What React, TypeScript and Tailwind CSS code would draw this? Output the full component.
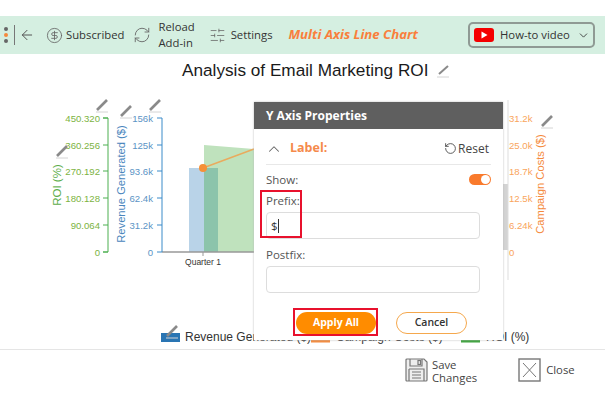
import React from "react";
import { ArrowLeft, ChevronDown, ChevronUp, CircleDollarSign, RefreshCw, RotateCcw, SlidersHorizontal } from "lucide-react";

const chartFont = '"Liberation Sans", Arial, sans-serif';

// Small pencil mark shown beside every editable chart label
function Pencil({ x, y }: { x: number; y: number }) {
  return (
    <g transform={`translate(${x} ${y})`}>
      <path d="M-5 4 L5 -6" stroke="#8a8a8a" strokeWidth="2.6" />
      <path d="M-6 6 H6" stroke="#d4d4d4" strokeWidth="1" />
    </g>
  );
}

type Tick = { y: number; label: string };

const ys = [118, 145, 171, 198, 225, 252];
const roiTicks: Tick[] = ["450.320", "360.256", "270.192", "180.128", "90.064", "0"].map((label, i) => ({ y: ys[i], label }));
const revenueTicks: Tick[] = ["156k", "125k", "93.6k", "62.4k", "31.2k", "0"].map((label, i) => ({ y: ys[i], label }));
const costTicks: Tick[] = ["31.2k", "25.0k", "18.7k", "12.5k", "6.24k", "0"].map((label, i) => ({ y: ys[i], label }));

function Chart() {
  return (
    <svg viewBox="0 86 605 263" className="block w-[605px] h-[263px]" style={{ fontFamily: chartFont }}>
      {/* series */}
      <path d="M204 145 L254 149 V252 H204 Z" fill="#bfe2bd" />
      <rect x="189" y="168" width="29" height="84" fill="#b9d3e8" />
      <rect x="204" y="168" width="14" height="84" fill="#8cc4ab" />
      <path d="M203 168 L254 149" stroke="#e9ab5e" strokeWidth="1.5" fill="none" />
      <circle cx="203" cy="168" r="4" fill="#f59138" />
      <rect x="503" y="184" width="5" height="66" fill="#d3d3d3" />

      {/* base line */}
      <path d="M162 252 H254" stroke="#999999" strokeWidth="1.5" />
      <path d="M203 252 V256" stroke="#999999" />
      <text x="203" y="265" fontSize="8.5" textAnchor="middle" fill="#333333">Quarter 1</text>

      {/* ROI axis */}
      <path d="M103 118 H108 V252 H103" stroke="#4caf50" strokeWidth="1" fill="none" />
      {roiTicks.map((t) => (
        <g key={t.label}>
          <path d={`M103 ${t.y} H108`} stroke="#4caf50" />
          <text x="100" y={t.y + 3.5} fontSize="9.6" textAnchor="end" fill="#7cb342">{t.label}</text>
        </g>
      ))}
      <text transform="translate(61 185) rotate(-90)" fontSize="11.5" textAnchor="middle" fill="#5cad4a">ROI (%)</text>

      {/* Revenue axis */}
      <path d="M162 118 V252" stroke="#3b8bc9" strokeWidth="1" />
      {revenueTicks.map((t) => (
        <g key={t.label}>
          <path d={`M157 ${t.y} H162`} stroke="#3b8bc9" />
          <text x="153" y={t.y + 3.5} fontSize="9.6" textAnchor="end" fill="#5b94c5">{t.label}</text>
        </g>
      ))}
      <text transform="translate(125 184) rotate(-90)" fontSize="11.2" textAnchor="middle" fill="#4a86bd">Revenue Generated ($)</text>

      {/* Campaign costs axis */}
      <path d="M508 100 V280" stroke="#dddddd" />
      {costTicks.map((t) => (
        <text key={t.label} x="509" y={t.y + 3.5} fontSize="9.6" fill="#f9a45c">{t.label}</text>
      ))}
      <text transform="translate(544 184) rotate(-90)" fontSize="11.2" textAnchor="middle" fill="#f58a3c">Campaign Costs ($)</text>

      {/* legend */}
      <rect x="161" y="333" width="19" height="9" fill="#2a75b3" />
      <text x="185" y="341" fontSize="12" fill="#333333">Revenue Generated ($)</text>
      <rect x="311" y="340" width="19" height="2.5" fill="#f58a3c" />
      <text x="336" y="341" fontSize="12" fill="#333333">Campaign Costs ($)</text>
      <rect x="461" y="340" width="19" height="2.5" fill="#3da33d" />
      <text x="486" y="341" fontSize="12" fill="#333333">ROI (%)</text>

      <Pencil x={102} y={106} />
      <Pencil x={126} y={112} />
      <Pencil x={155} y={106} />
      <Pencil x={62} y={152} />
      <Pencil x={547} y={122} />
      <Pencil x={172} y={332} />
    </svg>
  );
}

function AxisDialog() {
  return (
    <div className="absolute left-[254px] top-[102px] w-[249px] h-[238px] bg-white shadow-[0_0_2px_#bbbbbb] text-[11.5px] text-[#555555]">
      <div className="h-[27px] bg-[#5f5f5f] flex items-center pl-3 text-[12px] font-bold text-white">Y Axis Properties</div>
      <div className="mx-3 h-[36px] pt-1 flex items-center border-b border-[#e8e8e8]">
        <ChevronUp size={18} strokeWidth={1.4} className="text-[#666666] mr-[7px] -ml-[1px]" />
        <span className="text-[12.5px] font-bold text-[#f58a4b]">Label:</span>
        <div className="ml-auto mr-[2px] flex items-center gap-[1px] text-[12px] text-[#444444]">
          <RotateCcw size={13} strokeWidth={1.6} />
          Reset
        </div>
      </div>
      <div className="mx-3 mt-[6px] h-[16px] flex items-center justify-between">
        <span className="pt-[2px]">Show:</span>
        <div className="w-[22px] h-[11px] rounded-full bg-[#f97a2c] flex justify-end items-center pr-[1px]">
          <div className="w-[9px] h-[9px] rounded-full bg-white" />
        </div>
      </div>
      <div className="mx-3 mt-[6px] leading-[16px]">Prefix:</div>
      <div className="ml-3 mr-[23px] mt-[3px] h-[27px] border border-[#dddddd] rounded-[4px] flex items-center pl-1 text-[#333333]">
        $<span className="w-px h-[14px] bg-[#333333]" />
      </div>
      <div className="mx-3 mt-[8px] leading-[16px]">Postfix:</div>
      <div className="ml-3 mr-[23px] mt-[3px] h-[27px] border border-[#dddddd] rounded-[4px]" />
      <div className="mt-[19px] flex pl-[42px] gap-[20px]">
        <button className="w-[80px] h-[22px] rounded-full bg-[#ff8c00] text-white text-[10.5px] font-bold">Apply All</button>
        <button className="w-[71px] h-[22px] rounded-full bg-white border border-[#f5a84d] text-[#333333] text-[10.5px] font-semibold">Cancel</button>
      </div>
      {/* red highlight boxes */}
      <div className="absolute left-[6px] top-[88px] w-[42px] h-[48px] border-[2px] border-[#e8112d]" />
      <div className="absolute left-[39px] top-[206px] w-[85px] h-[28px] border-[2px] border-[#e8112d]" />
    </div>
  );
}

export default function App() {
  return (
    <div className="relative w-[605px] h-[404px] overflow-hidden bg-white" style={{ fontFamily: '"Open Sans", sans-serif' }}>
      <div className="h-4" />
      {/* toolbar */}
      <div className="h-[38px] bg-[#d5efe1] flex items-center text-[11.3px] text-[#333333]">
        <div className="ml-1 w-[4px] flex flex-col gap-[2px]">
          <span className="w-1 h-1 rounded-full bg-[#666666]" />
          <span className="w-1 h-1 rounded-full bg-[#f58a3c]" />
          <span className="w-1 h-1 rounded-full bg-[#666666]" />
        </div>
        <div className="ml-[6px] w-px h-[20px] bg-[#777777]" />
        <ArrowLeft size={16} strokeWidth={1.5} className="ml-[4px] text-[#555555]" />
        <CircleDollarSign size={17} strokeWidth={1.2} className="ml-[11px] text-[#666666]" />
        <span className="ml-[3px] whitespace-nowrap">Subscribed</span>
        <RefreshCw size={18} strokeWidth={1.2} className="ml-[9px] text-[#666666]" />
        <span className="ml-[7px] leading-[16px] whitespace-nowrap">Reload<br />Add-in</span>
        <SlidersHorizontal size={17} strokeWidth={1.1} className="ml-[14px] text-[#666666]" />
        <span className="ml-[5px] whitespace-nowrap">Settings</span>
        <span className="ml-[16px] text-[13.2px] font-bold italic text-[#f97f3c] whitespace-nowrap">Multi Axis Line Chart</span>
        <div className="ml-auto mr-[10px] w-[127px] h-[26px] border-2 border-[#8f9a94] rounded-[5px] flex items-center pl-1 shrink-0">
          <svg width="20" height="14" viewBox="0 0 20 14" className="shrink-0">
            <rect width="20" height="14" rx="3" fill="#f40000" />
            <path d="M7.5 3.5 L13.5 7 L7.5 10.5 Z" fill="#ffffff" />
          </svg>
          <span className="ml-[6px] whitespace-nowrap">How-to video</span>
          <ChevronDown size={13} strokeWidth={1.6} className="ml-auto mr-[3px] shrink-0" />
        </div>
      </div>

      {/* chart title */}
      <div className="h-8 pt-[2px] flex items-center pl-[182px] text-[17.2px] text-[#1a1a1a]" style={{ fontFamily: chartFont }}>
        Analysis of Email Marketing ROI
        <svg width="14" height="14" viewBox="0 0 14 14" className="ml-[8px]">
          <path d="M3 10 L12 2" stroke="#8a8a8a" strokeWidth="2" />
          <path d="M1 13 H13" stroke="#d4d4d4" />
        </svg>
      </div>

      <Chart />

      {/* footer */}
      <div className="border-t border-[#e5e5e5] flex items-start pt-2 pl-[405px] text-[11.3px] text-[#444444]">
        <svg width="23" height="24" viewBox="0 0 23 24" fill="none" stroke="#777777" strokeWidth="1.2">
          <path d="M2 1 H19 L22 4 V22 Q22 23 21 23 H2 Q1 23 1 22 V2 Q1 1 2 1 Z" fill="#eeeeee" />
          <path d="M5 1 V8 H17 V1" />
          <rect x="13" y="2.5" width="2.5" height="4" />
          <path d="M4 11 H19 V23 M4 11 V23 M7 14 H16 M7 17 H16 M7 20 H16" />
        </svg>
        <div className="ml-[4px] leading-[13px]">
          <div>Save</div>
          <div>Changes</div>
        </div>
        <svg width="23" height="24" viewBox="0 0 23 24" fill="none" stroke="#777777" className="ml-[41px]">
          <rect x="1" y="1" width="21" height="22" strokeWidth="1.4" />
          <path d="M5 5 L18 19 M18 5 L5 19" strokeWidth="1" />
        </svg>
        <span className="ml-[5px] leading-[24px]">Close</span>
      </div>

      <AxisDialog />
    </div>
  );
}
